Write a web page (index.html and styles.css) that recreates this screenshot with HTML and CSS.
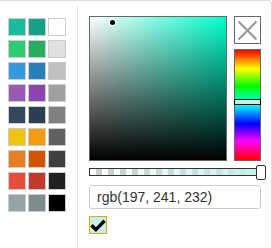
FILE: index.html
```html
<!DOCTYPE html>
<html lang="en">
<head>
    <meta charset="UTF-8">
    <title>Color picker</title>
    <link rel="stylesheet" href="styles.css">
</head>
<body>
    <div class="picker">
        <div class="swatches">
            <span class="swatch" style="background: #1abc9c"></span>
            <span class="swatch" style="background: #16a085"></span>
            <span class="swatch" style="background: #ffffff"></span>
            <span class="swatch" style="background: #2ecc71"></span>
            <span class="swatch" style="background: #27ae60"></span>
            <span class="swatch" style="background: #e0e0e0"></span>
            <span class="swatch" style="background: #3498db"></span>
            <span class="swatch" style="background: #2980b9"></span>
            <span class="swatch" style="background: #c0c0c0"></span>
            <span class="swatch" style="background: #9b59b6"></span>
            <span class="swatch" style="background: #8e44ad"></span>
            <span class="swatch" style="background: #a0a0a0"></span>
            <span class="swatch" style="background: #34495e"></span>
            <span class="swatch" style="background: #2c3e50"></span>
            <span class="swatch" style="background: #808080"></span>
            <span class="swatch" style="background: #f1c40f"></span>
            <span class="swatch" style="background: #f39c12"></span>
            <span class="swatch" style="background: #606060"></span>
            <span class="swatch" style="background: #e67e22"></span>
            <span class="swatch" style="background: #d35400"></span>
            <span class="swatch" style="background: #404040"></span>
            <span class="swatch" style="background: #e74c3c"></span>
            <span class="swatch" style="background: #c0392b"></span>
            <span class="swatch" style="background: #202020"></span>
            <span class="swatch" style="background: #95a5a6"></span>
            <span class="swatch" style="background: #7f8c8d"></span>
            <span class="swatch" style="background: #000000"></span>
        </div>

        <div class="panel">
            <div class="top">
                <div class="sv">
                    <span class="sv-dot"></span>
                </div>
                <div class="side">
                    <button class="close" type="button" title="Close">
                        <svg width="25" height="26" viewBox="0 0 25 26">
                            <path d="M3.5 4.5 L21.5 22.5 M21.5 4.5 L3.5 22.5" stroke="#999" stroke-width="2" fill="none"/>
                        </svg>
                    </button>
                    <div class="hue">
                        <span class="hue-marker"></span>
                    </div>
                </div>
            </div>

            <div class="alpha">
                <span class="alpha-handle"></span>
            </div>

            <input class="value" type="text" value="rgb(197, 241, 232)">

            <button class="ok" type="button" title="OK">
                <svg width="16" height="16" viewBox="0 0 16 16">
                    <path d="M0.3 9.6 L2.8 7.1 L5.9 10.2 L13.4 2.4 L15.7 4.9 L5.9 15 Z" fill="#000"/>
                </svg>
            </button>
        </div>
    </div>
</body>
</html>
```

FILE: styles.css
```css
body {
    margin: 0;
    padding: 0;
    background-color: white;
    font-family: "Liberation Sans", Arial, sans-serif;
    color: #333;
}
.picker {
    display: flex;
    width: 272px;
    height: 248px;
    box-sizing: border-box;
    border-top: 1px solid #ddd;
    border-right: 1px solid #ddd;
    border-top-right-radius: 4px;
}
.swatches {
    width: 69px;
    padding: 17px 0 0 8px;
    display: grid;
    grid-template-columns: repeat(3, 18px);
    grid-auto-rows: 18px;
    column-gap: 2px;
    row-gap: 4px;
    align-content: start;
}
.swatch {
    box-sizing: border-box;
    border: 1px solid #ccc;
}
.panel {
    margin-top: 5px;
    padding: 10px 0 0 11px;
    border-left: 1px solid #e5e5e5;
    display: flex;
    flex-direction: column;
    align-items: flex-start;
}
.top {
    display: flex;
    gap: 7px;
}
.sv {
    position: relative;
    width: 138px;
    height: 145px;
    box-sizing: border-box;
    border: 1px solid #666;
    background: linear-gradient(to top, #000, rgba(0, 0, 0, 0)),
                linear-gradient(to right, #fff, hsl(168, 100%, 50%));
}
.sv-dot {
    position: absolute;
    left: 20px;
    top: 3px;
    width: 5px;
    height: 5px;
    border-radius: 50%;
    background: #000;
    box-shadow: 0 0 0 1px #fff;
}
.side {
    width: 27px;
    display: flex;
    flex-direction: column;
    gap: 5px;
}
.close {
    width: 27px;
    height: 28px;
    padding: 0;
    box-sizing: border-box;
    border: 1px solid #666;
    background: white;
    display: flex;
    align-items: center;
    justify-content: center;
    cursor: pointer;
}
.hue {
    position: relative;
    flex: 1;
    box-sizing: border-box;
    border: 1px solid #666;
    background: linear-gradient(to bottom, #f00, #ff0 17%, #0f0 33%, #0ff 50%, #00f 67%, #f0f 83%, #f00);
}
.hue-marker {
    position: absolute;
    left: -1px;
    right: -1px;
    top: 49px;
    height: 4px;
    border: 1px solid #000;
    background: rgb(197, 241, 232);
}
.alpha {
    position: relative;
    margin-top: 7px;
    width: 174px;
    height: 8px;
    box-sizing: border-box;
    border: 1px solid #333;
    background: linear-gradient(to right, rgba(197, 241, 232, 0), rgb(197, 241, 232)),
                repeating-conic-gradient(#ccc 0 25%, #fff 0 50%) 0 0 / 12px 12px;
}
.alpha-handle {
    position: absolute;
    right: -4px;
    top: -4px;
    width: 8px;
    height: 13px;
    border: 1px solid #333;
    border-radius: 2px;
    background: white;
}
.value {
    margin-top: 9px;
    width: 172px;
    height: 24px;
    box-sizing: border-box;
    padding: 0 7px;
    border: 1px solid #ccc;
    border-radius: 3px;
    font-family: "Liberation Sans", Arial, sans-serif;
    font-size: 14px;
    color: #333;
}
.ok {
    margin-top: 7px;
    width: 18px;
    height: 18px;
    padding: 0;
    box-sizing: border-box;
    border: 1px solid #f0a30a;
    background: rgb(197, 241, 232);
    display: flex;
    align-items: center;
    justify-content: center;
    cursor: pointer;
}
```
